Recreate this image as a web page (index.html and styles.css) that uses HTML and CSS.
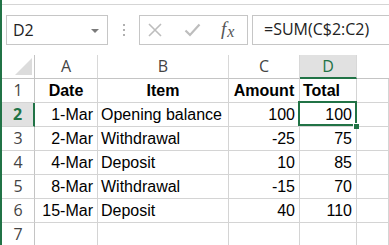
FILE: index.html
```html
<!DOCTYPE html>
<html>
<head>
<meta charset="utf-8">
<link rel="stylesheet" href="styles.css">
</head>
<body>
<div class="app">
  <div class="edge"></div>
  <div class="main">
    <div class="ribbon"></div>
    <div class="fbar">
      <div class="namebox"><span>D2</span><span class="caret"></span></div>
      <div class="dots"><i></i><i></i><i></i></div>
      <div class="btns">
        <svg class="ico" width="16" height="16" viewBox="0 0 16 16"><path d="M2 2 L14 14 M14 2 L2 14" stroke="#bdbdbd" stroke-width="1.6" fill="none"/></svg>
        <svg class="ico chk" width="17" height="14" viewBox="0 0 17 14"><path d="M1.5 7.5 L6 12 L15.5 1.5" stroke="#bdbdbd" stroke-width="2.2" fill="none"/></svg>
        <span class="fx"><i>f</i><i class="x">x</i></span>
      </div>
      <div class="formula">=SUM(C$2:C2)</div>
    </div>
    <div class="sheet">
      <div class="hc corner"><span class="tri"></span></div>
      <div class="hc">A</div>
      <div class="hc">B</div>
      <div class="hc">C</div>
      <div class="hc sel">D</div>
      <div class="hc last"></div>

      <div class="rh">1</div>
      <div class="c b ctr">Date</div>
      <div class="c b ctr">Item</div>
      <div class="c b ctr">Amount</div>
      <div class="c b">Total</div>
      <div class="c"></div>

      <div class="rh rsel">2</div>
      <div class="c r">1-Mar</div>
      <div class="c">Opening balance</div>
      <div class="c r">100</div>
      <div class="c r active">100<span class="frame"></span><span class="handle"></span></div>
      <div class="c"></div>

      <div class="rh">3</div>
      <div class="c r">2-Mar</div>
      <div class="c">Withdrawal</div>
      <div class="c r">-25</div>
      <div class="c r">75</div>
      <div class="c"></div>

      <div class="rh">4</div>
      <div class="c r">4-Mar</div>
      <div class="c">Deposit</div>
      <div class="c r">10</div>
      <div class="c r">85</div>
      <div class="c"></div>

      <div class="rh">5</div>
      <div class="c r">8-Mar</div>
      <div class="c">Withdrawal</div>
      <div class="c r">-15</div>
      <div class="c r">70</div>
      <div class="c"></div>

      <div class="rh">6</div>
      <div class="c r">15-Mar</div>
      <div class="c">Deposit</div>
      <div class="c r">40</div>
      <div class="c r">110</div>
      <div class="c"></div>

      <div class="rh">7</div>
      <div class="c"></div>
      <div class="c"></div>
      <div class="c"></div>
      <div class="c"></div>
      <div class="c"></div>
    </div>
  </div>
</div>
</body>
</html>
```
FILE: styles.css
```css
html, body {
  margin: 0;
  padding: 0;
  background: #fff;
  width: 389px;
  height: 245px;
  overflow: hidden;
}
.app {
  display: flex;
  height: 245px;
}
.edge {
  width: 2px;
  background: #217346;
  flex: none;
}
.main {
  flex: 1;
  min-width: 0;
  overflow: hidden;
}
.ribbon {
  height: 4px;
  border-bottom: 1px solid #d5d5d5;
}
.fbar {
  height: 50px;
  box-sizing: border-box;
  padding: 10px 0 10px 4px;
  display: flex;
  align-items: flex-start;
  font-family: "Open Sans", "Liberation Sans", sans-serif;
}
.namebox {
  width: 102px;
  height: 30px;
  box-sizing: border-box;
  border: 1px solid #c6c6c6;
  display: flex;
  align-items: center;
  justify-content: space-between;
  padding: 0 8px 0 6px;
  font-size: 16px;
  color: #222;
  flex: none;
}
.caret {
  width: 0;
  height: 0;
  border-left: 4px solid transparent;
  border-right: 4px solid transparent;
  border-top: 4px solid #7a7a7a;
  margin-top: 1px;
}
.dots {
  width: 31px;
  height: 30px;
  display: flex;
  flex-direction: column;
  align-items: center;
  justify-content: center;
  gap: 3px;
  flex: none;
}
.dots i {
  display: block;
  width: 2px;
  height: 2px;
  background: #b0b0b0;
}
.btns {
  width: 109px;
  height: 30px;
  box-sizing: border-box;
  border: 1px solid #c6c6c6;
  display: flex;
  align-items: center;
  padding-left: 7px;
  flex: none;
}
.ico {
  display: block;
  flex: none;
}
.chk {
  margin-left: 21px;
}
.fx {
  margin-left: 20px;
  font-family: "Liberation Serif", serif;
  font-size: 19px;
  color: #555;
  line-height: 1;
  margin-top: -3px;
}
.fx i {
  font-style: italic;
}
.fx .x {
  font-size: 16px;
  position: relative;
  top: 2px;
  margin-left: 1px;
}
.formula {
  margin-left: 4px;
  flex: 1;
  height: 30px;
  box-sizing: border-box;
  border: 1px solid #c6c6c6;
  border-right: none;
  padding-left: 11px;
  font-size: 16px;
  line-height: 27px;
  color: #222;
  white-space: nowrap;
}
.sheet {
  display: grid;
  grid-template-columns: 33px 63px 131px 71px 57px 1fr;
  grid-auto-rows: 24px;
  font-family: "Liberation Sans", Arial, sans-serif;
  font-size: 16px;
  color: #000;
}
.hc, .rh, .c {
  box-sizing: border-box;
  border-right: 1px solid #d4d4d4;
  border-bottom: 1px solid #d4d4d4;
  line-height: 23px;
  white-space: nowrap;
  overflow: visible;
}
.hc {
  text-align: center;
  color: #444;
  font-family: "Open Sans", "Liberation Sans", sans-serif;
  font-size: 16px;
  border-bottom-color: #c4c4c4;
  border-right-color: #d8d8d8;
}
.hc.last {
  border-right: none;
}
.corner {
  position: relative;
  border-right-color: #c4c4c4;
}
.tri {
  position: absolute;
  right: 2px;
  bottom: 3px;
  width: 0;
  height: 0;
  border-left: 17px solid transparent;
  border-bottom: 17px solid #dcdcdc;
}
.hc.sel {
  background: #e1e1e1;
  color: #217346;
  border-bottom: 2px solid #217346;
}
.rh {
  text-align: center;
  color: #444;
  font-family: "Open Sans", "Liberation Sans", sans-serif;
  font-size: 16px;
  border-right-color: #c4c4c4;
}
.rh.rsel {
  background: #e1e1e1;
  color: #217346;
  font-weight: bold;
  border-right: 2px solid #217346;
}
.c {
  padding: 0 3px;
}
.c.r {
  text-align: right;
  padding-right: 4px;
}
.c.b {
  font-weight: bold;
}
.c.ctr {
  text-align: center;
  padding: 0;
}
.active {
  position: relative;
}
.frame {
  position: absolute;
  left: -2px;
  top: -2px;
  width: 59px;
  height: 25px;
  box-sizing: border-box;
  border: 2px solid #217346;
}
.handle {
  position: absolute;
  left: 53px;
  top: 20px;
  width: 5px;
  height: 5px;
  background: #217346;
  border: 1px solid #fff;
  border-right: none;
  border-bottom: none;
}
```
